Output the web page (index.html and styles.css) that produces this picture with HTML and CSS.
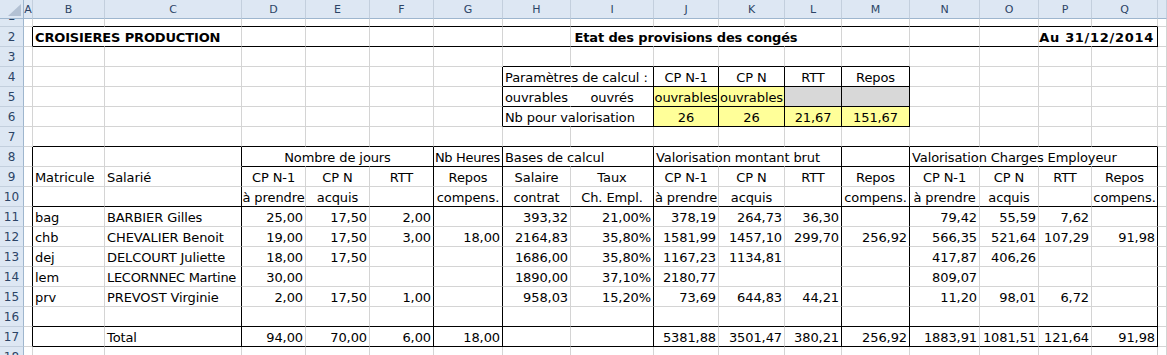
FILE: index.html
```html
<!DOCTYPE html>
<html lang="fr">
<head>
<meta charset="utf-8">
<title>Etat des provisions des congés</title>
<link rel="stylesheet" href="styles.css">
</head>
<body>
<div class="sheet">
  <div class="row h">
    <div class="corner"><svg width="23" height="18" viewBox="0 0 23 18"><polygon points="21,4 21,16 8,16" fill="#b3c1d3"/></svg></div>
    <div class="ch">A</div><div class="ch">B</div><div class="ch">C</div><div class="ch">D</div><div class="ch">E</div><div class="ch">F</div><div class="ch">G</div><div class="ch">H</div><div class="ch">I</div><div class="ch">J</div><div class="ch">K</div><div class="ch">L</div><div class="ch">M</div><div class="ch">N</div><div class="ch">O</div><div class="ch">P</div><div class="ch">Q</div><div class="ch"></div>
  </div>
  <div class="row r1">
    <div class="rh rh1"><span>1</span></div>
    <div class="c"></div>
    <div class="c u"></div><div class="c u"></div><div class="c u"></div><div class="c u"></div><div class="c u"></div><div class="c u"></div><div class="c u"></div><div class="c u"></div><div class="c u"></div><div class="c u"></div><div class="c u"></div><div class="c u"></div><div class="c u"></div><div class="c u"></div><div class="c u"></div><div class="c u"></div>
    <div class="c"></div>
  </div>
  <div class="row">
    <div class="rh">2</div>
    <div class="c k"></div>
    <div class="c u x o b">CROISIERES PRODUCTION</div>
    <div class="c u"></div><div class="c u"></div><div class="c u"></div><div class="c u"></div><div class="c u"></div><div class="c u"></div>
    <div class="c u x"></div>
    <div class="c u x m o b">Etat des provisions des congés</div>
    <div class="c u x"></div>
    <div class="c u"></div><div class="c u"></div><div class="c u"></div><div class="c u"></div>
    <div class="c u x"></div>
    <div class="c u k t o b wide">Au 31/12/2014</div>
    <div class="c"></div>
  </div>
  <div class="row">
    <div class="rh">3</div>
    <div class="c"></div>
    <div class="c"></div><div class="c"></div><div class="c"></div><div class="c"></div><div class="c"></div><div class="c"></div>
    <div class="c u"></div><div class="c u"></div><div class="c u"></div><div class="c u"></div><div class="c u"></div><div class="c u"></div>
    <div class="c"></div><div class="c"></div><div class="c"></div><div class="c"></div>
    <div class="c"></div>
  </div>
  <div class="row">
    <div class="rh">4</div>
    <div class="c"></div>
    <div class="c"></div><div class="c"></div><div class="c"></div><div class="c"></div><div class="c"></div>
    <div class="c k"></div>
    <div class="c u x o">Paramètres de calcul :</div>
    <div class="c u k"></div>
    <div class="c u k m">CP N-1</div>
    <div class="c u k m">CP N</div>
    <div class="c u k m">RTT</div>
    <div class="c u k m">Repos</div>
    <div class="c"></div><div class="c"></div><div class="c"></div><div class="c"></div>
    <div class="c"></div>
  </div>
  <div class="row">
    <div class="rh">5</div>
    <div class="c"></div>
    <div class="c"></div><div class="c"></div><div class="c"></div><div class="c"></div><div class="c"></div>
    <div class="c k"></div>
    <div class="c u x">ouvrables</div>
    <div class="c u k m">ouvrés</div>
    <div class="c u k m y">ouvrables</div>
    <div class="c u k m y">ouvrables</div>
    <div class="c u k g"></div>
    <div class="c u k g"></div>
    <div class="c"></div><div class="c"></div><div class="c"></div><div class="c"></div>
    <div class="c"></div>
  </div>
  <div class="row">
    <div class="rh">6</div>
    <div class="c"></div>
    <div class="c"></div><div class="c"></div><div class="c"></div><div class="c"></div><div class="c"></div>
    <div class="c k"></div>
    <div class="c u x o">Nb pour valorisation</div>
    <div class="c u k"></div>
    <div class="c u k m y">26</div>
    <div class="c u k m y">26</div>
    <div class="c u k m y">21,67</div>
    <div class="c u k m y">151,67</div>
    <div class="c"></div><div class="c"></div><div class="c"></div><div class="c"></div>
    <div class="c"></div>
  </div>
  <div class="row">
    <div class="rh">7</div>
    <div class="c"></div>
    <div class="c u"></div><div class="c u"></div><div class="c u"></div><div class="c u"></div><div class="c u"></div><div class="c u"></div><div class="c u"></div><div class="c u"></div><div class="c u"></div><div class="c u"></div><div class="c u"></div><div class="c u"></div><div class="c u"></div><div class="c u"></div><div class="c u"></div><div class="c u"></div>
    <div class="c"></div>
  </div>
  <div class="row">
    <div class="rh">8</div>
    <div class="c k"></div>
    <div class="c"></div>
    <div class="c k"></div>
    <div class="c u x"></div>
    <div class="c u x m o">Nombre de jours</div>
    <div class="c u k"></div>
    <div class="c u k o tight">Nb Heures</div>
    <div class="c u x o">Bases de calcul</div>
    <div class="c u k"></div>
    <div class="c u x o">Valorisation montant brut</div>
    <div class="c u x"></div>
    <div class="c u k"></div>
    <div class="c u k"></div>
    <div class="c u x o">Valorisation Charges Employeur</div>
    <div class="c u x"></div>
    <div class="c u x"></div>
    <div class="c u k"></div>
    <div class="c"></div>
  </div>
  <div class="row">
    <div class="rh">9</div>
    <div class="c k"></div>
    <div class="c">Matricule</div>
    <div class="c k">Salarié</div>
    <div class="c m">CP N-1</div>
    <div class="c m">CP N</div>
    <div class="c k m">RTT</div>
    <div class="c k m">Repos</div>
    <div class="c m">Salaire</div>
    <div class="c k m">Taux</div>
    <div class="c m">CP N-1</div>
    <div class="c m">CP N</div>
    <div class="c k m">RTT</div>
    <div class="c k m">Repos</div>
    <div class="c m">CP N-1</div>
    <div class="c m">CP N</div>
    <div class="c m">RTT</div>
    <div class="c k m">Repos</div>
    <div class="c"></div>
  </div>
  <div class="row">
    <div class="rh">10</div>
    <div class="c k"></div>
    <div class="c u"></div>
    <div class="c u k"></div>
    <div class="c u m">à prendre</div>
    <div class="c u m">acquis</div>
    <div class="c u k m"></div>
    <div class="c u k m">compens.</div>
    <div class="c u m">contrat</div>
    <div class="c u k m">Ch. Empl.</div>
    <div class="c u m">à prendre</div>
    <div class="c u m">acquis</div>
    <div class="c u k m"></div>
    <div class="c u k m">compens.</div>
    <div class="c u m">à prendre</div>
    <div class="c u m">acquis</div>
    <div class="c u m"></div>
    <div class="c u k m">compens.</div>
    <div class="c"></div>
  </div>
  <div class="row">
    <div class="rh">11</div>
    <div class="c k"></div>
    <div class="c">bag</div>
    <div class="c k">BARBIER Gilles</div>
    <div class="c t">25,00</div>
    <div class="c t">17,50</div>
    <div class="c k t">2,00</div>
    <div class="c k t"></div>
    <div class="c t">393,32</div>
    <div class="c k t">21,00%</div>
    <div class="c t">378,19</div>
    <div class="c t">264,73</div>
    <div class="c k t">36,30</div>
    <div class="c k t"></div>
    <div class="c t">79,42</div>
    <div class="c t">55,59</div>
    <div class="c t">7,62</div>
    <div class="c k t"></div>
    <div class="c"></div>
  </div>
  <div class="row">
    <div class="rh">12</div>
    <div class="c k"></div>
    <div class="c">chb</div>
    <div class="c k">CHEVALIER Benoit</div>
    <div class="c t">19,00</div>
    <div class="c t">17,50</div>
    <div class="c k t">3,00</div>
    <div class="c k t">18,00</div>
    <div class="c t">2164,83</div>
    <div class="c k t">35,80%</div>
    <div class="c t">1581,99</div>
    <div class="c t">1457,10</div>
    <div class="c k t">299,70</div>
    <div class="c k t">256,92</div>
    <div class="c t">566,35</div>
    <div class="c t">521,64</div>
    <div class="c t">107,29</div>
    <div class="c k t">91,98</div>
    <div class="c"></div>
  </div>
  <div class="row">
    <div class="rh">13</div>
    <div class="c k"></div>
    <div class="c">dej</div>
    <div class="c k">DELCOURT Juliette</div>
    <div class="c t">18,00</div>
    <div class="c t">17,50</div>
    <div class="c k t"></div>
    <div class="c k t"></div>
    <div class="c t">1686,00</div>
    <div class="c k t">35,80%</div>
    <div class="c t">1167,23</div>
    <div class="c t">1134,81</div>
    <div class="c k t"></div>
    <div class="c k t"></div>
    <div class="c t">417,87</div>
    <div class="c t">406,26</div>
    <div class="c t"></div>
    <div class="c k t"></div>
    <div class="c"></div>
  </div>
  <div class="row">
    <div class="rh">14</div>
    <div class="c k"></div>
    <div class="c">lem</div>
    <div class="c k narrow">LECORNNEC Martine</div>
    <div class="c t">30,00</div>
    <div class="c t"></div>
    <div class="c k t"></div>
    <div class="c k t"></div>
    <div class="c t">1890,00</div>
    <div class="c k t">37,10%</div>
    <div class="c t">2180,77</div>
    <div class="c t"></div>
    <div class="c k t"></div>
    <div class="c k t"></div>
    <div class="c t">809,07</div>
    <div class="c t"></div>
    <div class="c t"></div>
    <div class="c k t"></div>
    <div class="c"></div>
  </div>
  <div class="row">
    <div class="rh">15</div>
    <div class="c k"></div>
    <div class="c">prv</div>
    <div class="c k">PREVOST Virginie</div>
    <div class="c t">2,00</div>
    <div class="c t">17,50</div>
    <div class="c k t">1,00</div>
    <div class="c k t"></div>
    <div class="c t">958,03</div>
    <div class="c k t">15,20%</div>
    <div class="c t">73,69</div>
    <div class="c t">644,83</div>
    <div class="c k t">44,21</div>
    <div class="c k t"></div>
    <div class="c t">11,20</div>
    <div class="c t">98,01</div>
    <div class="c t">6,72</div>
    <div class="c k t"></div>
    <div class="c"></div>
  </div>
  <div class="row">
    <div class="rh">16</div>
    <div class="c k"></div>
    <div class="c u"></div>
    <div class="c u k"></div>
    <div class="c u"></div>
    <div class="c u"></div>
    <div class="c u k"></div>
    <div class="c u k"></div>
    <div class="c u"></div>
    <div class="c u k"></div>
    <div class="c u"></div>
    <div class="c u"></div>
    <div class="c u k"></div>
    <div class="c u k"></div>
    <div class="c u"></div>
    <div class="c u"></div>
    <div class="c u"></div>
    <div class="c u k"></div>
    <div class="c"></div>
  </div>
  <div class="row">
    <div class="rh">17</div>
    <div class="c k"></div>
    <div class="c u"></div>
    <div class="c u k">Total</div>
    <div class="c u t">94,00</div>
    <div class="c u t">70,00</div>
    <div class="c u k t">6,00</div>
    <div class="c u k t">18,00</div>
    <div class="c u t"></div>
    <div class="c u k t"></div>
    <div class="c u t">5381,88</div>
    <div class="c u t">3501,47</div>
    <div class="c u k t">380,21</div>
    <div class="c u k t">256,92</div>
    <div class="c u t">1883,91</div>
    <div class="c u t">1081,51</div>
    <div class="c u t">121,64</div>
    <div class="c u k t">91,98</div>
    <div class="c"></div>
  </div>
  <div class="row">
    <div class="rh">18</div>
    <div class="c"></div>
    <div class="c"></div><div class="c"></div><div class="c"></div><div class="c"></div><div class="c"></div><div class="c"></div><div class="c"></div><div class="c"></div><div class="c"></div><div class="c"></div><div class="c"></div><div class="c"></div><div class="c"></div><div class="c"></div><div class="c"></div><div class="c"></div>
    <div class="c"></div>
  </div>
</div>
</body>
</html>
```

FILE: styles.css
```css
html, body {
  margin: 0;
  padding: 0;
  background: #ffffff;
  overflow: hidden;
}

body {
  font-family: "DejaVu Sans", sans-serif;
  font-size: 13px;
  color: #000000;
}

.sheet {
  display: flex;
  flex-direction: column;
  width: 1167px;
}

.row {
  display: grid;
  grid-template-columns: 24px 9px 72px 137px 64px 64px 64px 69px 68px 83px 65px 66px 57px 68px 70px 59px 53px 66px 1fr;
  height: 20px;
}

.row.h { height: 19px; }
.row.r1 { height: 8px; }

/* column headers */
.corner,
.ch {
  box-sizing: border-box;
  background: #dde7f3;
  border-right: 1px solid #c3cfdd;
  border-bottom: 1px solid #9eb6ce;
}

.corner {
  border-right-color: #9eb6ce;
  display: flex;
}

.ch {
  font-size: 11px;
  line-height: 16px;
  padding-top: 2px;
  text-align: center;
  color: #2c4466;
  min-width: 0;
}

/* row headers */
.rh {
  box-sizing: border-box;
  background: #dde7f3;
  border-right: 1px solid #9eb6ce;
  border-bottom: 1px solid #c3cfdd;
  color: #2c4466;
  font-size: 12px;
  line-height: 15px;
  display: flex;
  align-items: flex-end;
  justify-content: center;
  padding-bottom: 1px;
  overflow: hidden;
}

.rh1 {
  display: block;
  padding: 0;
  text-align: center;
}

.rh1 span {
  display: block;
  margin-top: -10px;
  line-height: 15px;
}

/* cells */
.c {
  box-sizing: border-box;
  min-width: 0;
  border-right: 1px solid #d4d4d4;
  border-bottom: 1px solid #d4d4d4;
  display: flex;
  align-items: flex-end;
  padding: 0 2px 1px;
  line-height: 15px;
  white-space: nowrap;
  letter-spacing: -0.1px;
}

.k { border-right-color: #000000; }
.u { border-bottom-color: #000000; }
.x { border-right-color: transparent; }
.t { justify-content: flex-end; }
.m { justify-content: center; }
.o { z-index: 1; }
.b { font-weight: bold; letter-spacing: -0.15px; }
.b.wide { letter-spacing: 0.7px; padding-right: 3px; }
.y { background: #ffff99; }
.g { background: #d8d8d8; }
.tight { padding-left: 1px; letter-spacing: -0.35px; }
.narrow { letter-spacing: -0.3px; }
```
